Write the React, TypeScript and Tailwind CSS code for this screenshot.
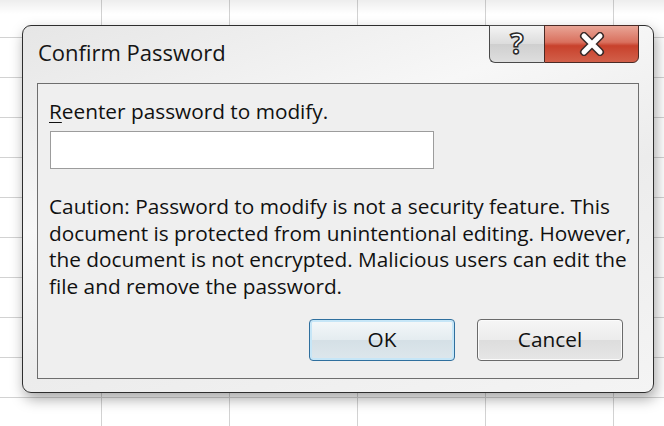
import React from 'react';

const lines = [
  'Caution: Password to modify is not a security feature. This',
  'document is protected from unintentional editing. However,',
  'the document is not encrypted. Malicious users can edit the',
  'file and remove the password.',
];

const CloseGlyph: React.FC = () => (
  <svg width="34" height="24" viewBox="0 0 34 24">
    <path d="M9 4 L25 20 M25 4 L9 20" stroke="#3a2a28" strokeWidth="8" strokeLinecap="round" />
    <path d="M9 4 L25 20 M25 4 L9 20" stroke="#ffffff" strokeWidth="5" strokeLinecap="round" />
  </svg>
);

const App: React.FC = () => {
  return (
    <div
      className="w-[664px] h-[426px] overflow-hidden pl-[22px] pt-[25px] bg-white bg-[linear-gradient(to_bottom,rgba(0,0,0,0.07),transparent_14px),linear-gradient(to_right,transparent_100px,#d2d2d2_100px,#d2d2d2_101px,transparent_101px),linear-gradient(to_bottom,transparent_36px,#d2d2d2_36px,#d2d2d2_37px,transparent_37px)] bg-[length:100%_426px,128px_40px,128px_40px] bg-[position:0_0,1px_0,0_1px]"
      style={{ fontFamily: '"Open Sans", "Noto Sans", sans-serif' }}
    >
      <div className="relative w-[632px] h-[368px] rounded-[9px] border border-[#2e2e2e] bg-[linear-gradient(160deg,#e6e6e6_0%,#f7f7f7_35%,#ececec_60%,#f4f4f4_100%)] shadow-[2px_6px_14px_rgba(0,0,0,0.35)] flex flex-col">
        <div className="h-[57px] flex items-start justify-between pl-[15px] pr-[14px]">
          <div className="pt-[11px] text-[22px] leading-[30px] text-[#151515]">Confirm Password</div>
          <div className="flex -mt-px">
            <div className="w-[55px] h-[38px] rounded-bl-[6px] border border-[#4a4a4a] border-r-0 bg-[linear-gradient(to_bottom,#f4f4f4,#dcdcdc_50%,#cfcfcf_51%,#dedede)] flex items-center justify-center">
              <span className="text-[28px] font-bold leading-none text-white [-webkit-text-stroke:1.5px_#2a2a2a] pb-[2px]">?</span>
            </div>
            <div className="w-[95px] h-[38px] rounded-br-[6px] border border-[#4a2a25] bg-[linear-gradient(to_bottom,#e9a596,#d9705e_45%,#c8412c_55%,#d2604a)] flex items-center justify-center">
              <CloseGlyph />
            </div>
          </div>
        </div>
        <div className="mx-[14px] w-[602px] h-[296px] border border-[#6e6e6e] bg-[#efefef] flex flex-col pl-[11px] pr-[15px] text-[20.8px] text-[#111]">
          <div className="mt-[12px] leading-[30px]">
            <span className="underline underline-offset-[3px] decoration-1">R</span>eenter password to modify.
          </div>
          <div className="mt-[5px] ml-px w-[384px] h-[38px] border border-[#9c9c9c] bg-white" />
          <div className="mt-[24px] leading-[26.6px]">
            {lines.map((l) => (
              <div key={l} className="whitespace-nowrap">{l}</div>
            ))}
          </div>
          <div className="mt-auto mb-[17px] flex justify-end gap-[22px]">
            <button className="w-[146px] h-[42px] rounded-[4px] border border-[#2f6f9e] bg-[linear-gradient(to_bottom,#f4f8fa,#e4ecf0_50%,#d5e0e6_51%,#dde7ec)] shadow-[inset_0_0_0_2px_#c6e6f7] text-[20.8px] text-[#111]">
              OK
            </button>
            <button className="w-[146px] h-[42px] rounded-[4px] border border-[#6a6a6a] bg-[linear-gradient(to_bottom,#f6f6f6,#ececec_50%,#dddddd_51%,#e6e6e6)] shadow-[inset_0_0_0_1px_#fbfbfb] text-[20.8px] text-[#111]">
              Cancel
            </button>
          </div>
        </div>
      </div>
    </div>
  );
};

export default App;
